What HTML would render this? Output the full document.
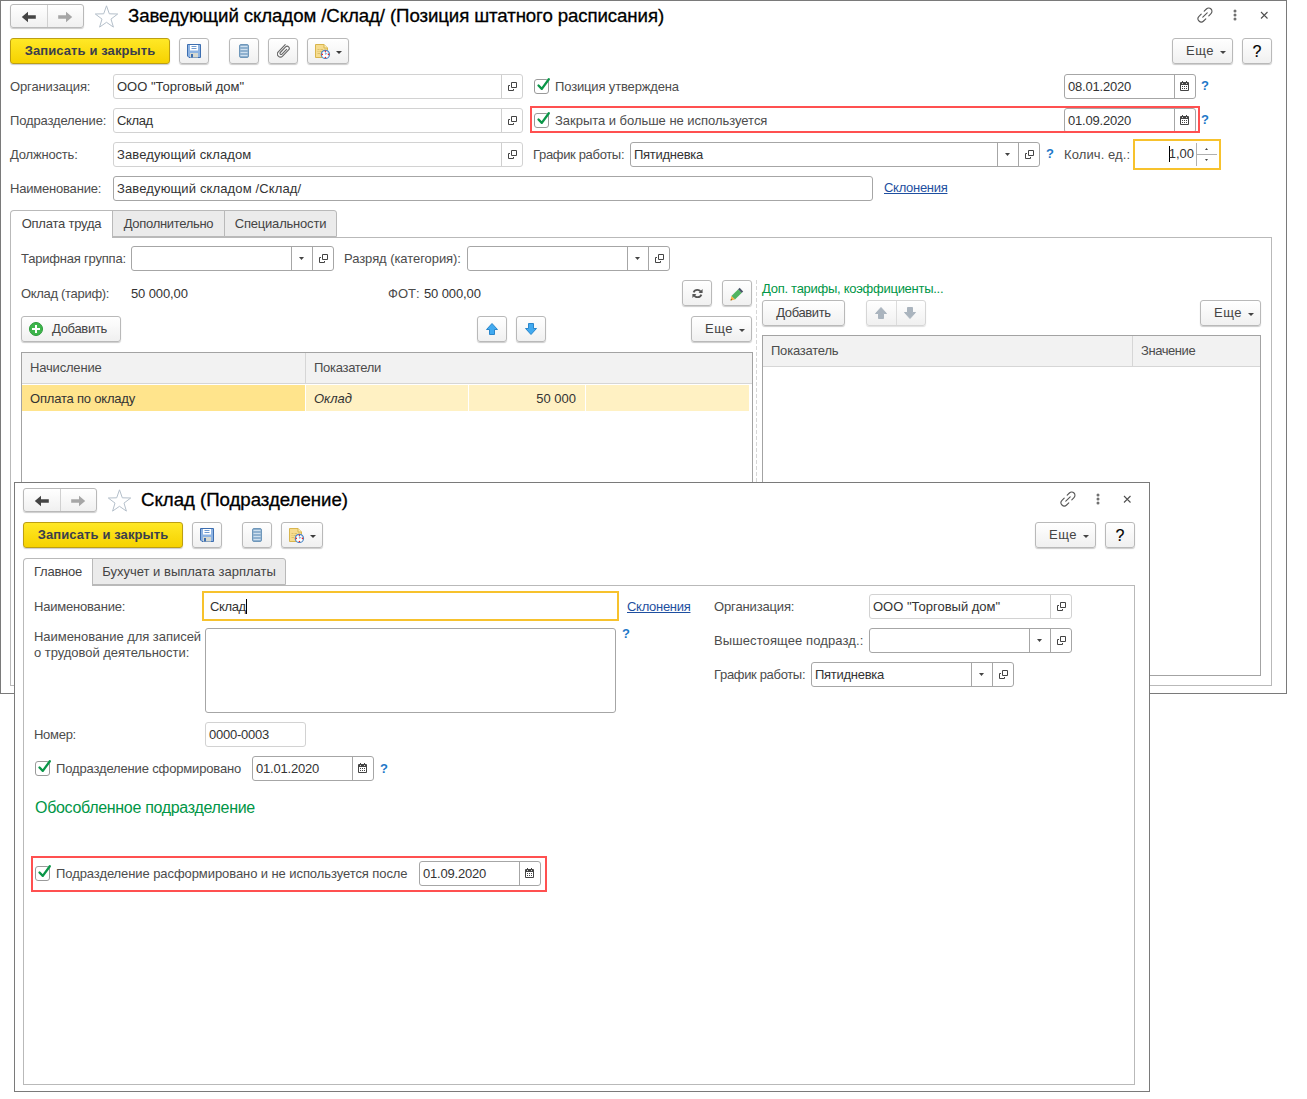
<!DOCTYPE html>
<html lang="ru"><head><meta charset="utf-8"><title>Позиция штатного расписания</title>
<style>
*{box-sizing:border-box;margin:0;padding:0}
html,body{width:1307px;height:1099px;overflow:hidden;background:#fff}
body{font-family:"Liberation Sans",sans-serif;font-size:13px;color:#333;position:relative}
.a{position:absolute;white-space:nowrap}
.win{position:absolute;background:#fff;border:1px solid #7a7a7a}
.ttl{font-size:18.67px;line-height:24px;color:#000;letter-spacing:-0.1px;-webkit-text-stroke:0.3px #000}
.lbl{margin-top:1px;position:absolute;white-space:nowrap;color:#4c4c4c;line-height:16px;font-size:13px}
.fld{position:absolute;height:25px;border:1px solid #a6a6a6;border-radius:3px;background:#fff;line-height:23px;padding-left:3px;white-space:nowrap;color:#333;overflow:hidden}
.fld.ro{border-color:#d2d2d2}
.fb{position:absolute;top:0;bottom:0;width:21px;border-left:1px solid #a6a6a6}
.ro .fb{border-left-color:#cfcfcf}
.fb svg{position:absolute;left:50%;top:50%}
.btn{position:absolute;height:26px;border:1px solid #b9b9b9;border-radius:3px;background:linear-gradient(#fff,#f0f0f0);box-shadow:0 1px 1px rgba(0,0,0,.2);line-height:24px;text-align:center;color:#444;white-space:nowrap;font-size:13px}
.btn.y{background:linear-gradient(#ffe826,#f6d200);border-color:#bd9f12;font-weight:bold;color:#3b3e4c;letter-spacing:0.1px}
.btn svg{position:absolute}
.btn.dis{border-color:#d6d6d6;box-shadow:0 1px 1px rgba(0,0,0,.12)}
.tab{position:absolute;height:27px;border:1px solid #b9b9b9;background:#ebebeb;line-height:25px;text-align:center;color:#444;font-size:13px}
.tab.on{background:#fff;border-bottom:0;height:28px;z-index:2}
.panel{position:absolute;border:1px solid #b9b9b9;background:#fff}
.tbl{position:absolute;border:1px solid #a3a3a3;background:#fff}
.th{position:absolute;top:0;height:31px;background:#f2f2f2;border-bottom:1px solid #d6d6d6;border-right:1px solid #d6d6d6;line-height:30px;padding-left:8px;color:#4c4c4c}
.q{position:absolute;color:#1e78c8;font-weight:bold;font-size:13px;line-height:16px}
.lnk{position:absolute;color:#1e4fa0;text-decoration:underline;line-height:16px}
.cb{position:absolute;width:15px;height:15px;border:1px solid #9a9a9a;border-radius:3px;background:#fff}
.cb svg{position:absolute;left:1px;top:-4px}
</style></head><body>
<!-- WINDOW 1 -->
<div class="win" id="w1" style="left:0;top:0;width:1287px;height:694px"></div>
<!--W1S-->
<!-- nav -->
<div class="btn" style="left:10px;top:4px;width:74px;height:24px"><div class="a" style="left:36px;top:0;bottom:0;width:1px;background:#d0d0d0"></div>
<svg style="left:10px;top:5.5px" width="16" height="12" viewBox="0 0 16 12"><path d="M0.8 6 L7 0.8 V4.3 H14.8 V7.7 H7 V11.2 Z" fill="#444"/></svg>
<svg style="left:46px;top:5.5px" width="16" height="12" viewBox="0 0 16 12"><path d="M15.2 6 L9 0.8 V4.3 H1.2 V7.7 H9 V11.2 Z" fill="#a6a6a6"/></svg></div>
<svg class="a" style="left:94px;top:5px" width="25" height="24" viewBox="0 0 25 24"><path d="M12.5 0.8 L15.3 8.8 L23.7 9.0 L17.0 14.1 L19.4 22.1 L12.5 17.3 L5.6 22.1 L8.0 14.1 L1.3 9.0 L9.7 8.8Z" fill="#fff" stroke="#b4bfca" stroke-width="1"/></svg>
<div class="a ttl" style="left:128px;top:4px">Заведующий складом /Склад/ (Позиция штатного расписания)</div>
<svg class="a" style="left:1197px;top:7px" width="16" height="16" viewBox="0 0 16 16"><path d="M7.2 4.2 L9.4 2 A3.2 3.2 0 0 1 14 6.6 L11.8 8.8 M8.8 11.8 L6.6 14 A3.2 3.2 0 0 1 2 9.4 L4.2 7.2 M5.8 10.2 L10.2 5.8" fill="none" stroke="#555" stroke-width="1.1" stroke-linecap="round"/></svg><svg class="a" style="left:1232.5px;top:9.1px" width="4" height="12" viewBox="0 0 4 12"><circle cx="2" cy="2" r="1.5" fill="#707070"/><circle cx="2" cy="6" r="1.5" fill="#707070"/><circle cx="2" cy="10" r="1.5" fill="#707070"/></svg><svg class="a" style="left:1260px;top:11px" width="8" height="8" viewBox="0 0 8 8"><path d="M1 1L7.5 7.5M7.5 1L1 7.5" stroke="#505050" stroke-width="1.1"/></svg>
<!-- toolbar -->
<div class="btn y" style="left:10px;top:38px;width:160px">Записать и закрыть</div>
<div class="btn" style="left:179px;top:38px;width:30px"><svg class="a" style="left:7px;top:5px" width="14" height="14" viewBox="0 0 14 14"><path d="M0.5 0.5H13.5V13.5H2L0.5 12Z" fill="#8db3e2" stroke="#3d6eb0"/><rect x="3" y="1" width="8" height="5.5" fill="#fff"/><path d="M4.5 2.5H9.5M4.5 4.5H9.5" stroke="#6f9ad0" stroke-width="1"/><rect x="3" y="9" width="8" height="4.5" fill="#d7d9d0"/><rect x="4" y="10" width="2" height="3.5" fill="#3d6eb0"/></svg></div>
<div class="btn" style="left:229px;top:38px;width:30px"><svg class="a" style="left:9px;top:5px" width="10" height="14" viewBox="0 0 10 14"><rect x="0.5" y="0.5" width="9" height="13" rx="1.5" fill="#8fb1cf" stroke="#6f97ba"/><path d="M1.5 2.5H8.5M1.5 5.5H8.5M1.5 8.5H8.5M1.5 11.5H8.5" stroke="#cfe0ef" stroke-width="1.2"/></svg></div>
<div class="btn" style="left:268px;top:38px;width:30px"><svg class="a" style="left:8px;top:5px" width="13" height="14" viewBox="0 0 13 14"><path d="M8.2 0.6 L1.3 7.9 A3 3 0 0 0 5.6 12.1 L11.6 5.9 A2.1 2.1 0 0 0 8.6 2.9 L3.3 8.5 A1.2 1.2 0 0 0 5 10.2 L9.6 5.4" fill="none" stroke="#666" stroke-width="1.1" stroke-linecap="round"/></svg></div>
<div class="btn" style="left:307px;top:38px;width:42px"><svg class="a" style="left:7px;top:5px" width="28" height="15" viewBox="0 0 28 15"><path d="M0.5 0.5H9L12.5 4V13.5H0.5Z" fill="#f6dc8f" stroke="#d8b54d"/><path d="M9 0.5V4H12.5" fill="#fbeeba" stroke="#d8b54d"/><path d="M2.5 5.5H4.5M5.5 5.5H8M2.5 7.5H3.5M4.5 7.5H7M2.5 9.5H5" stroke="#dcc06a"/><circle cx="10.4" cy="10.4" r="4.1" fill="#fff" stroke="#4b89c8" stroke-width="1.2"/><path d="M10.4 10.4V8.2M10.4 10.4L12.3 9.2" stroke="#7fa8d8" stroke-width="1"/><circle cx="10.4" cy="7.3" r="0.8" fill="#e22"/><circle cx="10.4" cy="13.5" r="0.8" fill="#e22"/><circle cx="7.3" cy="10.4" r="0.8" fill="#e22"/><circle cx="13.5" cy="10.4" r="0.8" fill="#e22"/><path d="M21 7H27L24 10Z" fill="#3c3c3c"/></svg></div>
<div class="btn" style="left:1172px;top:38px;width:61px;text-align:left;padding-left:13px;letter-spacing:0.5px">Еще<svg class="a" style="left:47px;top:12px" width="6" height="3" viewBox="0 0 6 3"><path d="M0 0H6L3 3Z" fill="#444"/></svg></div>
<div class="btn" style="left:1242px;top:38px;width:30px;color:#000;font-size:16px;padding-top:1px;-webkit-text-stroke:0.15px #000">?</div>
<!-- row1 -->
<div class="lbl" style="left:10px;top:78px;letter-spacing:-0.14px">Организация:</div>
<div class="fld ro" style="left:113px;top:74px;width:410px">ООО "Торговый дом"<div class="fb" style="right:0"><svg style="margin:-5px 0 0 -4px" width="9" height="9" viewBox="0 0 9 9"><path d="M3.5 0.5H8.5V5.5H3.5Z M2 3.5H0.5V8.5H5.5V7" fill="none" stroke="#444" stroke-width="1"/></svg></div></div>
<div class="cb" style="left:534px;top:79px"><svg width="16" height="16" viewBox="0 0 16 16"><path d="M2.5 9.5 L5.8 12.9 L12.8 3.3" fill="none" stroke="#0a9648" stroke-width="2.3" stroke-linecap="round" stroke-linejoin="round"/></svg></div>
<div class="lbl" style="left:555px;top:78px;letter-spacing:-0.15px">Позиция утверждена</div>
<div class="fld" style="left:1064px;top:74px;width:132px;letter-spacing:-0.19px">08.01.2020<div class="fb" style="right:0"><svg style="margin:-5.5px 0 0 -5px" width="9" height="10" viewBox="0 0 9 10"><rect x="0" y="1" width="9" height="9" rx="1" fill="#444"/><rect x="1" y="4" width="7" height="5" fill="#fff"/><rect x="2" y="5" width="1" height="1" fill="#444"/><rect x="4" y="5" width="1" height="1" fill="#444"/><rect x="6" y="5" width="1" height="1" fill="#444"/><rect x="2" y="7" width="1" height="1" fill="#444"/><rect x="4" y="7" width="1" height="1" fill="#444"/><rect x="6" y="7" width="1" height="1" fill="#444"/><rect x="2" y="0" width="1" height="2" fill="#444"/><rect x="6" y="0" width="1" height="2" fill="#444"/><rect x="2" y="2" width="1" height="1" fill="#fff" opacity=".8"/><rect x="6" y="2" width="1" height="1" fill="#fff" opacity=".8"/></svg></div></div>
<div class="q" style="left:1201px;top:78px">?</div>
<!-- row2 -->
<div class="lbl" style="left:10px;top:112px;letter-spacing:-0.15px">Подразделение:</div>
<div class="fld ro" style="left:113px;top:108px;width:410px;letter-spacing:-0.38px">Склад<div class="fb" style="right:0"><svg style="margin:-5px 0 0 -4px" width="9" height="9" viewBox="0 0 9 9"><path d="M3.5 0.5H8.5V5.5H3.5Z M2 3.5H0.5V8.5H5.5V7" fill="none" stroke="#444" stroke-width="1"/></svg></div></div>
<div class="a" style="left:530px;top:106px;width:670px;height:27px;border:2px solid #ff5050;z-index:3"></div>
<div class="cb" style="left:534px;top:113px"><svg width="16" height="16" viewBox="0 0 16 16"><path d="M2.5 9.5 L5.8 12.9 L12.8 3.3" fill="none" stroke="#0a9648" stroke-width="2.3" stroke-linecap="round" stroke-linejoin="round"/></svg></div>
<div class="lbl" style="left:555px;top:112px;letter-spacing:-0.03px">Закрыта и больше не используется</div>
<div class="fld" style="left:1064px;top:108px;width:132px;letter-spacing:-0.19px">01.09.2020<div class="fb" style="right:0"><svg style="margin:-5.5px 0 0 -5px" width="9" height="10" viewBox="0 0 9 10"><rect x="0" y="1" width="9" height="9" rx="1" fill="#444"/><rect x="1" y="4" width="7" height="5" fill="#fff"/><rect x="2" y="5" width="1" height="1" fill="#444"/><rect x="4" y="5" width="1" height="1" fill="#444"/><rect x="6" y="5" width="1" height="1" fill="#444"/><rect x="2" y="7" width="1" height="1" fill="#444"/><rect x="4" y="7" width="1" height="1" fill="#444"/><rect x="6" y="7" width="1" height="1" fill="#444"/><rect x="2" y="0" width="1" height="2" fill="#444"/><rect x="6" y="0" width="1" height="2" fill="#444"/><rect x="2" y="2" width="1" height="1" fill="#fff" opacity=".8"/><rect x="6" y="2" width="1" height="1" fill="#fff" opacity=".8"/></svg></div></div>
<div class="q" style="left:1201px;top:112px">?</div>
<!-- row3 -->
<div class="lbl" style="left:10px;top:146px;letter-spacing:-0.18px">Должность:</div>
<div class="fld ro" style="left:113px;top:142px;width:410px;letter-spacing:0.11px">Заведующий складом<div class="fb" style="right:0"><svg style="margin:-5px 0 0 -4px" width="9" height="9" viewBox="0 0 9 9"><path d="M3.5 0.5H8.5V5.5H3.5Z M2 3.5H0.5V8.5H5.5V7" fill="none" stroke="#444" stroke-width="1"/></svg></div></div>
<div class="lbl" style="left:533px;top:146px;letter-spacing:-0.33px">График работы:</div>
<div class="fld" style="left:630px;top:142px;width:410px;letter-spacing:-0.27px">Пятидневка<div class="fb" style="right:21px"><svg style="margin:-1.5px 0 0 -3px" width="5" height="3" viewBox="0 0 5 3"><path d="M0 0H5L2.5 3Z" fill="#444"/></svg></div><div class="fb" style="right:0"><svg style="margin:-5px 0 0 -4px" width="9" height="9" viewBox="0 0 9 9"><path d="M3.5 0.5H8.5V5.5H3.5Z M2 3.5H0.5V8.5H5.5V7" fill="none" stroke="#444" stroke-width="1"/></svg></div></div>
<div class="q" style="left:1046px;top:146px">?</div>
<div class="lbl" style="left:1064px;top:146px;letter-spacing:0.10px">Колич. ед.:</div>
<div class="a" style="left:1133px;top:139px;width:88px;height:31px;border:2px solid #f7c22d;background:#fff"></div><div class="a" style="left:1169px;top:146px;width:1px;height:16px;background:#000"></div><div class="a" style="left:1196px;top:143px;width:1px;height:23px;background:#b0b0b0"></div><div class="a" style="left:1196px;top:154px;width:21px;height:1px;background:#b0b0b0"></div><svg class="a" style="left:1205px;top:148px" width="3" height="2" viewBox="0 0 3 2"><path d="M0 2H3L1.5 0Z" fill="#444"/></svg><svg class="a" style="left:1205px;top:159px" width="3" height="2" viewBox="0 0 3 2"><path d="M0 0H3L1.5 2Z" fill="#444"/></svg>
<div class="a" style="left:1140px;top:146px;width:54px;text-align:right;line-height:16px">1,00</div>
<!-- row4 -->
<div class="lbl" style="left:10px;top:180px;letter-spacing:-0.20px">Наименование:</div>
<div class="fld" style="left:113px;top:176px;width:760px;letter-spacing:0.13px">Заведующий складом /Склад/</div>
<div class="lnk" style="left:884px;top:180px;letter-spacing:-0.29px">Склонения</div>
<!-- tabs -->
<div class="panel" style="left:10px;top:237px;width:1262px;height:449px"></div>
<div class="tab on" style="left:10px;top:210px;width:103px;border-radius:4px 0 0 0;letter-spacing:-0.21px">Оплата труда</div>
<div class="tab" style="left:112px;top:210px;width:113px;letter-spacing:-0.31px">Дополнительно</div>
<div class="tab" style="border-radius:0 3px 0 0;left:224px;top:210px;width:113px;letter-spacing:-0.20px">Специальности</div>
<!-- tab content -->
<div class="lbl" style="left:21px;top:250px;letter-spacing:-0.20px">Тарифная группа:</div>
<div class="fld" style="left:131px;top:246px;width:203px"><div class="fb" style="right:21px"><svg style="margin:-1.5px 0 0 -3px" width="5" height="3" viewBox="0 0 5 3"><path d="M0 0H5L2.5 3Z" fill="#444"/></svg></div><div class="fb" style="right:0"><svg style="margin:-5px 0 0 -4px" width="9" height="9" viewBox="0 0 9 9"><path d="M3.5 0.5H8.5V5.5H3.5Z M2 3.5H0.5V8.5H5.5V7" fill="none" stroke="#444" stroke-width="1"/></svg></div></div>
<div class="lbl" style="left:344px;top:250px;letter-spacing:-0.06px">Разряд (категория):</div>
<div class="fld" style="left:467px;top:246px;width:203px"><div class="fb" style="right:21px"><svg style="margin:-1.5px 0 0 -3px" width="5" height="3" viewBox="0 0 5 3"><path d="M0 0H5L2.5 3Z" fill="#444"/></svg></div><div class="fb" style="right:0"><svg style="margin:-5px 0 0 -4px" width="9" height="9" viewBox="0 0 9 9"><path d="M3.5 0.5H8.5V5.5H3.5Z M2 3.5H0.5V8.5H5.5V7" fill="none" stroke="#444" stroke-width="1"/></svg></div></div>
<div class="lbl" style="left:21px;top:285px;letter-spacing:-0.31px">Оклад (тариф):</div>
<div class="a" style="left:131px;top:286px;line-height:16px;letter-spacing:-0.12px">50 000,00</div>
<div class="lbl" style="left:388px;top:285px">ФОТ:</div>
<div class="a" style="left:424px;top:286px;line-height:16px;letter-spacing:-0.12px">50 000,00</div>
<div class="btn" style="left:682px;top:280px;width:30px"><svg class="a" style="left:9px;top:7px" width="11" height="11" viewBox="0 0 11 11"><path d="M9 4.2 A4 4 0 0 0 1.6 4.4 M2 6.8 A4 4 0 0 0 9.4 6.6" fill="none" stroke="#555" stroke-width="1.8"/><path d="M10.6 1 V5 H6.6Z M0.4 10 V6 H4.4Z" fill="#555"/></svg></div>
<div class="btn" style="left:722px;top:280px;width:30px"><svg class="a" style="left:7px;top:6px" width="14" height="14" viewBox="0 0 14 14"><path d="M9.6 0.8 L13.2 4.4 L11.6 6 L8 2.4Z" fill="#4a5568"/><path d="M8 2.4 L11.6 6 L5 12.6 L1.4 9Z" fill="#4fb45f"/><path d="M1.4 9 L5 12.6 L0.6 13.4Z" fill="#f5b041"/><path d="M0.6 13.4 L0.9 11.8 L2.2 13.1Z" fill="#6b4a1e"/></svg></div>
<div class="btn" style="left:21px;top:316px;width:100px;text-align:left;padding-left:30px;letter-spacing:-0.3px"><svg class="a" style="left:7px;top:5px" width="14" height="14" viewBox="0 0 14 14"><circle cx="7" cy="7" r="6.5" fill="#3db54b" stroke="#2c9a3b"/><path d="M3 7H11M7 3V11" stroke="#fff" stroke-width="2"/></svg>Добавить</div>
<div class="btn" style="left:477px;top:316px;width:30px"><svg class="a" style="left:8px;top:6px" width="12" height="12" viewBox="0 0 12 12"><path d="M6 0.5 L11.5 6.5 H8.5 V11.5 H3.5 V6.5 H0.5 Z" fill="#41aaf0" stroke="#2b86cb" stroke-width="1" stroke-linejoin="round"/></svg></div>
<div class="btn" style="left:516px;top:316px;width:30px"><svg class="a" style="left:8px;top:6px" width="12" height="12" viewBox="0 0 12 12"><path d="M6 11.5 L11.5 5.5 H8.5 V0.5 H3.5 V5.5 H0.5 Z" fill="#41aaf0" stroke="#2b86cb" stroke-width="1" stroke-linejoin="round"/></svg></div>
<div class="btn" style="left:691px;top:316px;width:61px;text-align:left;padding-left:13px;letter-spacing:0.5px">Еще<svg class="a" style="left:47px;top:12px" width="6" height="3" viewBox="0 0 6 3"><path d="M0 0H6L3 3Z" fill="#444"/></svg></div>
<!-- left table -->
<div class="tbl" style="left:21px;top:352px;width:732px;height:324px">
<div class="th" style="left:0;width:284px;letter-spacing:-0.18px">Начисление</div><div class="th" style="left:284px;width:446px;border-right:0;letter-spacing:-0.29px">Показатели</div>
<div class="a" style="left:0;top:32px;width:283px;height:26px;background:#ffe48c;line-height:27px;padding-left:8px;letter-spacing:-0.20px">Оплата по окладу</div>
<div class="a" style="left:284px;top:32px;width:162px;height:26px;background:#fff1c3;line-height:27px;padding-left:8px;font-style:italic">Оклад</div>
<div class="a" style="left:447px;top:32px;width:116px;height:26px;background:#fff1c3;line-height:27px;padding-right:9px;text-align:right">50 000</div>
<div class="a" style="left:564px;top:32px;width:163px;height:26px;background:#fff1c3"></div>
</div>
<!-- right side -->
<div class="a" style="left:756px;top:280px;width:1px;height:396px;background:repeating-linear-gradient(#d6d6d6 0 4px,#fff 4px 6px)"></div>
<div class="a" style="left:762px;top:281px;line-height:16px;color:#009646;letter-spacing:-0.27px">Доп. тарифы, коэффициенты...</div>
<div class="btn" style="left:762px;top:300px;width:83px;letter-spacing:-0.36px">Добавить</div>
<div class="btn dis" style="left:866px;top:300px;width:60px"><div class="a" style="left:29px;top:0;bottom:0;width:1px;background:#dcdcdc"></div><svg class="a" style="left:8px;top:6px" width="12" height="12" viewBox="0 0 12 12"><path d="M6 0.5 L11.5 6.5 H8.5 V11.5 H3.5 V6.5 H0.5 Z" fill="#aab4be" stroke="#aab4be" stroke-width="1" stroke-linejoin="round"/></svg><svg class="a" style="left:37px;top:6px" width="12" height="12" viewBox="0 0 12 12"><path d="M6 11.5 L11.5 5.5 H8.5 V0.5 H3.5 V5.5 H0.5 Z" fill="#aab4be" stroke="#aab4be" stroke-width="1" stroke-linejoin="round"/></svg></div>
<div class="btn" style="left:1200px;top:300px;width:61px;text-align:left;padding-left:13px;letter-spacing:0.5px">Еще<svg class="a" style="left:47px;top:12px" width="6" height="3" viewBox="0 0 6 3"><path d="M0 0H6L3 3Z" fill="#444"/></svg></div>
<div class="tbl" style="left:762px;top:335px;width:499px;height:341px">
<div class="th" style="left:0;width:370px;letter-spacing:-0.22px">Показатель</div><div class="th" style="left:370px;width:127px;border-right:0;letter-spacing:-0.43px">Значение</div>
</div>
<!--W1E-->
<!-- WINDOW 2 -->
<div class="win" id="w2" style="left:14px;top:482px;width:1136px;height:610px"></div>
<!--W2S-->
<!-- nav2 -->
<div class="btn" style="left:23px;top:488px;width:74px;height:24px"><div class="a" style="left:36px;top:0;bottom:0;width:1px;background:#d0d0d0"></div>
<svg style="left:10px;top:5.5px" width="16" height="12" viewBox="0 0 16 12"><path d="M0.8 6 L7 0.8 V4.3 H14.8 V7.7 H7 V11.2 Z" fill="#444"/></svg>
<svg style="left:46px;top:5.5px" width="16" height="12" viewBox="0 0 16 12"><path d="M15.2 6 L9 0.8 V4.3 H1.2 V7.7 H9 V11.2 Z" fill="#a6a6a6"/></svg></div>
<svg class="a" style="left:107px;top:489px" width="25" height="24" viewBox="0 0 25 24"><path d="M12.5 0.8 L15.3 8.8 L23.7 9.0 L17.0 14.1 L19.4 22.1 L12.5 17.3 L5.6 22.1 L8.0 14.1 L1.3 9.0 L9.7 8.8Z" fill="#fff" stroke="#b4bfca" stroke-width="1"/></svg>
<div class="a ttl" style="left:141px;top:488px;letter-spacing:-0.03px">Склад (Подразделение)</div>
<svg class="a" style="left:1060px;top:491px" width="16" height="16" viewBox="0 0 16 16"><path d="M7.2 4.2 L9.4 2 A3.2 3.2 0 0 1 14 6.6 L11.8 8.8 M8.8 11.8 L6.6 14 A3.2 3.2 0 0 1 2 9.4 L4.2 7.2 M5.8 10.2 L10.2 5.8" fill="none" stroke="#555" stroke-width="1.1" stroke-linecap="round"/></svg><svg class="a" style="left:1095.5px;top:493.1px" width="4" height="12" viewBox="0 0 4 12"><circle cx="2" cy="2" r="1.5" fill="#707070"/><circle cx="2" cy="6" r="1.5" fill="#707070"/><circle cx="2" cy="10" r="1.5" fill="#707070"/></svg><svg class="a" style="left:1123px;top:495px" width="8" height="8" viewBox="0 0 8 8"><path d="M1 1L7.5 7.5M7.5 1L1 7.5" stroke="#505050" stroke-width="1.1"/></svg>
<!-- toolbar2 -->
<div class="btn y" style="left:23px;top:522px;width:160px">Записать и закрыть</div>
<div class="btn" style="left:192px;top:522px;width:30px"><svg class="a" style="left:7px;top:5px" width="14" height="14" viewBox="0 0 14 14"><path d="M0.5 0.5H13.5V13.5H2L0.5 12Z" fill="#8db3e2" stroke="#3d6eb0"/><rect x="3" y="1" width="8" height="5.5" fill="#fff"/><path d="M4.5 2.5H9.5M4.5 4.5H9.5" stroke="#6f9ad0" stroke-width="1"/><rect x="3" y="9" width="8" height="4.5" fill="#d7d9d0"/><rect x="4" y="10" width="2" height="3.5" fill="#3d6eb0"/></svg></div>
<div class="btn" style="left:242px;top:522px;width:30px"><svg class="a" style="left:9px;top:5px" width="10" height="14" viewBox="0 0 10 14"><rect x="0.5" y="0.5" width="9" height="13" rx="1.5" fill="#8fb1cf" stroke="#6f97ba"/><path d="M1.5 2.5H8.5M1.5 5.5H8.5M1.5 8.5H8.5M1.5 11.5H8.5" stroke="#cfe0ef" stroke-width="1.2"/></svg></div>
<div class="btn" style="left:281px;top:522px;width:42px"><svg class="a" style="left:7px;top:5px" width="28" height="15" viewBox="0 0 28 15"><path d="M0.5 0.5H9L12.5 4V13.5H0.5Z" fill="#f6dc8f" stroke="#d8b54d"/><path d="M9 0.5V4H12.5" fill="#fbeeba" stroke="#d8b54d"/><path d="M2.5 5.5H4.5M5.5 5.5H8M2.5 7.5H3.5M4.5 7.5H7M2.5 9.5H5" stroke="#dcc06a"/><circle cx="10.4" cy="10.4" r="4.1" fill="#fff" stroke="#4b89c8" stroke-width="1.2"/><path d="M10.4 10.4V8.2M10.4 10.4L12.3 9.2" stroke="#7fa8d8" stroke-width="1"/><circle cx="10.4" cy="7.3" r="0.8" fill="#e22"/><circle cx="10.4" cy="13.5" r="0.8" fill="#e22"/><circle cx="7.3" cy="10.4" r="0.8" fill="#e22"/><circle cx="13.5" cy="10.4" r="0.8" fill="#e22"/><path d="M21 7H27L24 10Z" fill="#3c3c3c"/></svg></div>
<div class="btn" style="left:1035px;top:522px;width:61px;text-align:left;padding-left:13px;letter-spacing:0.5px">Еще<svg class="a" style="left:47px;top:12px" width="6" height="3" viewBox="0 0 6 3"><path d="M0 0H6L3 3Z" fill="#444"/></svg></div>
<div class="btn" style="left:1105px;top:522px;width:30px;color:#000;font-size:16px;padding-top:1px;-webkit-text-stroke:0.15px #000">?</div>
<!-- tabs2 -->
<div class="panel" style="left:23px;top:585px;width:1112px;height:500px"></div>
<div class="tab on" style="left:23px;top:558px;width:70px;border-radius:4px 0 0 0;letter-spacing:-0.23px">Главное</div>
<div class="tab" style="border-radius:0 3px 0 0;left:92px;top:558px;width:194px">Бухучет и выплата зарплаты</div>
<!-- left col -->
<div class="lbl" style="left:34px;top:598px;letter-spacing:-0.20px">Наименование:</div>
<div class="a" style="left:202px;top:591px;width:417px;height:30px;border:2px solid #f7c22d;background:#fff;line-height:27px;padding-left:6px;letter-spacing:-0.38px">Склад<span style="display:inline-block;width:1px;height:15px;background:#000;vertical-align:-3px"></span></div>
<div class="lnk" style="left:627px;top:599px;letter-spacing:-0.29px">Склонения</div>
<div class="lbl" style="left:34px;top:628px;letter-spacing:-0.04px">Наименование для записей<br>о трудовой деятельности:</div>
<div class="fld" style="left:205px;top:628px;width:411px;height:85px"></div>
<div class="q" style="left:622px;top:626px">?</div>
<div class="lbl" style="left:34px;top:726px;letter-spacing:-0.28px">Номер:</div>
<div class="fld ro" style="left:205px;top:722px;width:101px;letter-spacing:-0.25px">0000-0003</div>
<div class="cb" style="left:35px;top:761px"><svg width="16" height="16" viewBox="0 0 16 16"><path d="M2.5 9.5 L5.8 12.9 L12.8 3.3" fill="none" stroke="#0a9648" stroke-width="2.3" stroke-linecap="round" stroke-linejoin="round"/></svg></div>
<div class="lbl" style="left:56px;top:760px;letter-spacing:-0.15px">Подразделение сформировано</div>
<div class="fld" style="left:252px;top:756px;width:122px;letter-spacing:-0.19px">01.01.2020<div class="fb" style="right:0"><svg style="margin:-5.5px 0 0 -5px" width="9" height="10" viewBox="0 0 9 10"><rect x="0" y="1" width="9" height="9" rx="1" fill="#444"/><rect x="1" y="4" width="7" height="5" fill="#fff"/><rect x="2" y="5" width="1" height="1" fill="#444"/><rect x="4" y="5" width="1" height="1" fill="#444"/><rect x="6" y="5" width="1" height="1" fill="#444"/><rect x="2" y="7" width="1" height="1" fill="#444"/><rect x="4" y="7" width="1" height="1" fill="#444"/><rect x="6" y="7" width="1" height="1" fill="#444"/><rect x="2" y="0" width="1" height="2" fill="#444"/><rect x="6" y="0" width="1" height="2" fill="#444"/><rect x="2" y="2" width="1" height="1" fill="#fff" opacity=".8"/><rect x="6" y="2" width="1" height="1" fill="#fff" opacity=".8"/></svg></div></div>
<div class="q" style="left:380px;top:761px">?</div>
<div class="a" style="left:35px;top:798px;font-size:16px;line-height:20px;color:#009646;letter-spacing:-0.31px">Обособленное подразделение</div>
<div class="a" style="left:31px;top:856px;width:516px;height:36px;border:2px solid #ff5050;z-index:3"></div>
<div class="cb" style="left:35px;top:866px"><svg width="16" height="16" viewBox="0 0 16 16"><path d="M2.5 9.5 L5.8 12.9 L12.8 3.3" fill="none" stroke="#0a9648" stroke-width="2.3" stroke-linecap="round" stroke-linejoin="round"/></svg></div>
<div class="lbl" style="left:56px;top:865px;letter-spacing:-0.08px">Подразделение расформировано и не используется после</div>
<div class="fld" style="left:419px;top:861px;width:122px;letter-spacing:-0.19px">01.09.2020<div class="fb" style="right:0"><svg style="margin:-5.5px 0 0 -5px" width="9" height="10" viewBox="0 0 9 10"><rect x="0" y="1" width="9" height="9" rx="1" fill="#444"/><rect x="1" y="4" width="7" height="5" fill="#fff"/><rect x="2" y="5" width="1" height="1" fill="#444"/><rect x="4" y="5" width="1" height="1" fill="#444"/><rect x="6" y="5" width="1" height="1" fill="#444"/><rect x="2" y="7" width="1" height="1" fill="#444"/><rect x="4" y="7" width="1" height="1" fill="#444"/><rect x="6" y="7" width="1" height="1" fill="#444"/><rect x="2" y="0" width="1" height="2" fill="#444"/><rect x="6" y="0" width="1" height="2" fill="#444"/><rect x="2" y="2" width="1" height="1" fill="#fff" opacity=".8"/><rect x="6" y="2" width="1" height="1" fill="#fff" opacity=".8"/></svg></div></div>
<!-- right col -->
<div class="lbl" style="left:714px;top:598px;letter-spacing:-0.14px">Организация:</div>
<div class="fld ro" style="left:869px;top:594px;width:203px">ООО "Торговый дом"<div class="fb" style="right:0"><svg style="margin:-5px 0 0 -4px" width="9" height="9" viewBox="0 0 9 9"><path d="M3.5 0.5H8.5V5.5H3.5Z M2 3.5H0.5V8.5H5.5V7" fill="none" stroke="#444" stroke-width="1"/></svg></div></div>
<div class="lbl" style="left:714px;top:632px;letter-spacing:0.10px">Вышестоящее подразд.:</div>
<div class="fld" style="left:869px;top:628px;width:203px"><div class="fb" style="right:21px"><svg style="margin:-1.5px 0 0 -3px" width="5" height="3" viewBox="0 0 5 3"><path d="M0 0H5L2.5 3Z" fill="#444"/></svg></div><div class="fb" style="right:0"><svg style="margin:-5px 0 0 -4px" width="9" height="9" viewBox="0 0 9 9"><path d="M3.5 0.5H8.5V5.5H3.5Z M2 3.5H0.5V8.5H5.5V7" fill="none" stroke="#444" stroke-width="1"/></svg></div></div>
<div class="lbl" style="left:714px;top:666px;letter-spacing:-0.33px">График работы:</div>
<div class="fld" style="left:811px;top:662px;width:203px;letter-spacing:-0.27px">Пятидневка<div class="fb" style="right:21px"><svg style="margin:-1.5px 0 0 -3px" width="5" height="3" viewBox="0 0 5 3"><path d="M0 0H5L2.5 3Z" fill="#444"/></svg></div><div class="fb" style="right:0"><svg style="margin:-5px 0 0 -4px" width="9" height="9" viewBox="0 0 9 9"><path d="M3.5 0.5H8.5V5.5H3.5Z M2 3.5H0.5V8.5H5.5V7" fill="none" stroke="#444" stroke-width="1"/></svg></div></div>
<!--W2E-->
</body></html>
